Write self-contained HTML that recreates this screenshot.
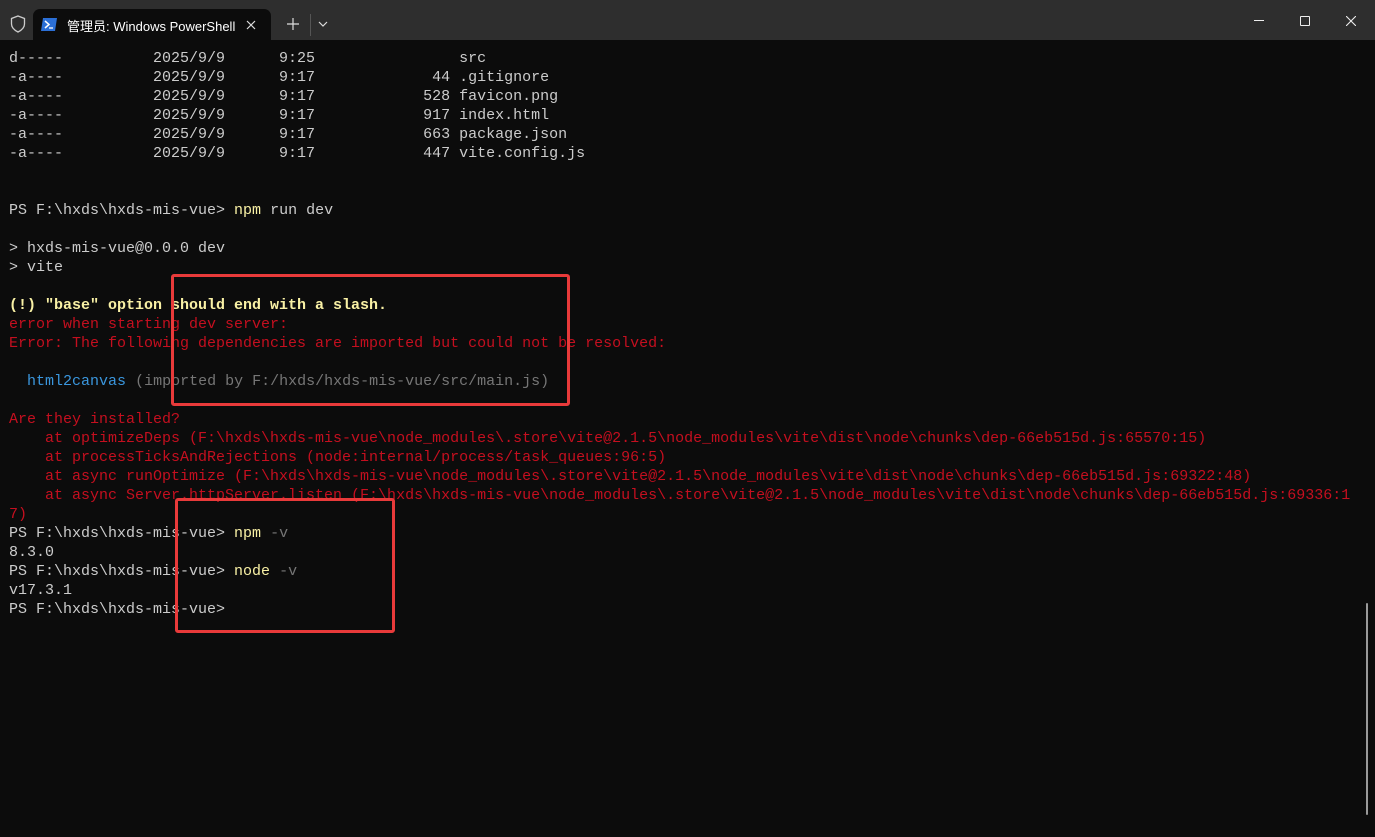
<!DOCTYPE html>
<html><head><meta charset="utf-8"><style>
html,body{margin:0;padding:0;width:1375px;height:837px;overflow:hidden;background:#0c0c0c;}
#tb{position:absolute;left:0;top:0;width:1375px;height:40px;background:#2e2e2e;}
#tab{position:absolute;left:33px;top:9px;width:238px;height:31px;background:#0c0c0c;border-radius:7px 7px 0 0;}
.t{font-family:"Liberation Sans","Noto Sans CJK SC",sans-serif;font-size:13px;color:#fff;position:absolute;}
pre{position:absolute;left:9px;top:49px;margin:0;font-family:"Liberation Mono",monospace;font-size:15px;line-height:19px;color:#cccccc;white-space:pre;}
.y{color:#f9f1a5}.yb{color:#f9f1a5;font-weight:bold}.r{color:#c50f1f}.b{color:#3a96dd}.g{color:#767676}
.box{position:absolute;border:3px solid #e83a3a;border-radius:3px;}
</style></head><body>
<div id="tb">
<svg style="position:absolute;left:10px;top:15px" width="16" height="18" viewBox="0 0 16 18"><path d="M8 1 L14.5 3.5 V9 C14.5 13 11 15.5 8 17 C5 15.5 1.5 13 1.5 9 V3.5 Z" fill="none" stroke="#ccc" stroke-width="1.3"/></svg>
<div id="tab">
<svg style="position:absolute;left:8px;top:9px" width="16" height="13" viewBox="0 0 16 13"><path d="M2 0 H16 L14 13 H0 Z" fill="#2b6fd6"/><path d="M4 3 L8 6.5 L4 10" stroke="#fff" stroke-width="1.5" fill="none"/><path d="M8 10 H12" stroke="#fff" stroke-width="1.3"/></svg>
<span class="t" style="left:34px;top:7px">管理员: Windows PowerShell</span>
<svg style="position:absolute;left:213px;top:11px" width="10" height="10"><path d="M1 1L9 9M9 1L1 9" stroke="#ddd" stroke-width="1.2"/></svg>
</div>
<svg style="position:absolute;left:287px;top:18px" width="12" height="12"><path d="M6 0V12M0 6H12" stroke="#ddd" stroke-width="1.2"/></svg>
<div style="position:absolute;left:310px;top:14px;width:1px;height:22px;background:#555"></div>
<svg style="position:absolute;left:318px;top:21px" width="10" height="6"><path d="M1 1L5 5L9 1" stroke="#ddd" stroke-width="1.2" fill="none"/></svg>
<div style="position:absolute;left:1254px;top:20px;width:10px;height:1px;background:#eee"></div>
<div style="position:absolute;left:1300px;top:16px;width:8px;height:8px;border:1px solid #eee;border-radius:1px"></div>
<svg style="position:absolute;left:1346px;top:16px" width="10" height="10"><path d="M0 0L10 10M10 0L0 10" stroke="#eee" stroke-width="1.1"/></svg>
</div>
<pre>d-----          2025/9/9      9:25                src
-a----          2025/9/9      9:17             44 .gitignore
-a----          2025/9/9      9:17            528 favicon.png
-a----          2025/9/9      9:17            917 index.html
-a----          2025/9/9      9:17            663 package.json
-a----          2025/9/9      9:17            447 vite.config.js


PS F:\hxds\hxds-mis-vue&gt; <span class="y">npm</span> run dev

&gt; hxds-mis-vue@0.0.0 dev
&gt; vite

<span class="yb">(!) "base" option should end with a slash.</span>
<span class="r">error when starting dev server:
Error: The following dependencies are imported but could not be resolved:</span>

  <span class="b">html2canvas</span> <span class="g">(imported by F:/hxds/hxds-mis-vue/src/main.js)</span>

<span class="r">Are they installed?
    at optimizeDeps (F:\hxds\hxds-mis-vue\node_modules\.store\vite@2.1.5\node_modules\vite\dist\node\chunks\dep-66eb515d.js:65570:15)
    at processTicksAndRejections (node:internal/process/task_queues:96:5)
    at async runOptimize (F:\hxds\hxds-mis-vue\node_modules\.store\vite@2.1.5\node_modules\vite\dist\node\chunks\dep-66eb515d.js:69322:48)
    at async Server.httpServer.listen (F:\hxds\hxds-mis-vue\node_modules\.store\vite@2.1.5\node_modules\vite\dist\node\chunks\dep-66eb515d.js:69336:1
7)</span>
PS F:\hxds\hxds-mis-vue&gt; <span class="y">npm</span> <span class="g">-v</span>
8.3.0
PS F:\hxds\hxds-mis-vue&gt; <span class="y">node</span> <span class="g">-v</span>
v17.3.1
PS F:\hxds\hxds-mis-vue&gt;</pre>
<div class="box" style="left:171px;top:274px;width:393px;height:126px"></div>
<div class="box" style="left:175px;top:498px;width:214px;height:129px"></div>
<div style="position:absolute;left:1366px;top:603px;width:2px;height:212px;background:#9a9a9a;border-radius:1px"></div>
</body></html>
